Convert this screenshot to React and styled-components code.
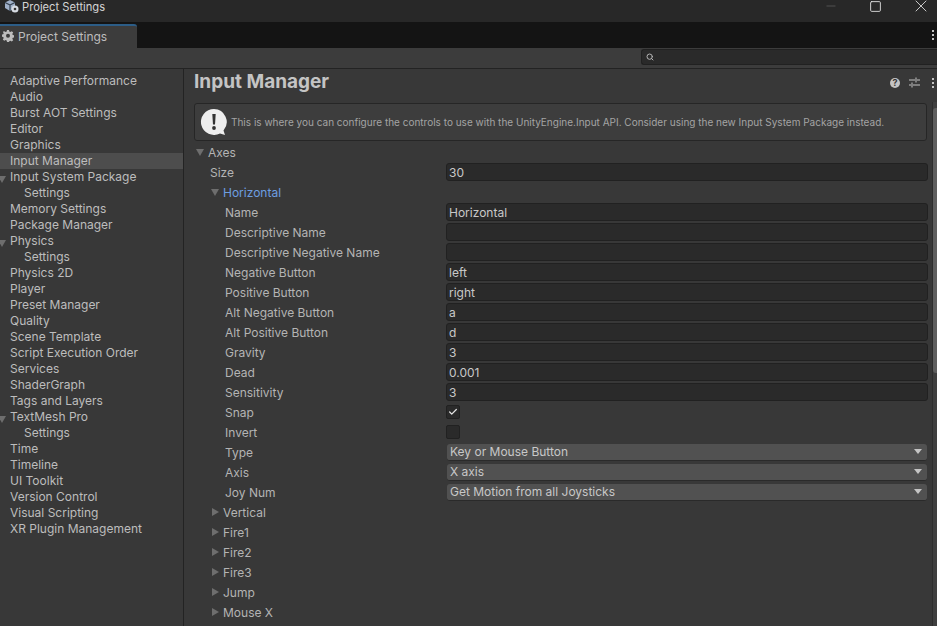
import React from "react";
import styled, { createGlobalStyle } from "styled-components";
import { X, Square, Minus, Search, Check } from "lucide-react";

const GlobalStyle = createGlobalStyle`
  html, body {
    margin: 0;
    padding: 0;
    background: #383838;
    overflow: hidden;
  }
  * {
    box-sizing: border-box;
  }
`;

const Window = styled.div`
  width: 937px;
  height: 626px;
  overflow: hidden;
  display: flex;
  flex-direction: column;
  font-family: Inter, "Liberation Sans", sans-serif;
  font-size: 12px;
  color: #bdbdbd;
  background: #383838;
`;

const TitleBar = styled.div`
  height: 22px;
  flex: none;
  display: flex;
  align-items: center;
  background: #282828;
  color: #d4d4d4;
  padding: 0 0 8px 3px;
  gap: 3px;
  font-size: 11.2px;
`;

const WindowButtons = styled.div`
  margin-left: auto;
  margin-right: -6px;
  margin-bottom: 2px;
  display: flex;
  align-items: center;
`;

const WindowButton = styled.div`
  width: 45px;
  height: 20px;
  display: flex;
  align-items: center;
  justify-content: center;
`;

const TabStrip = styled.div`
  height: 26px;
  flex: none;
  display: flex;
  align-items: flex-end;
  justify-content: space-between;
  background: #141414;
`;

const Tab = styled.div`
  width: 137px;
  height: 24px;
  display: flex;
  align-items: center;
  gap: 4px;
  padding: 0 0 2px 2px;
  background: #3c3c3c;
  border-top: 2px solid #2c5d87;
  border-top-right-radius: 3px;
  color: #bdbdbd;
`;

const Dots = styled.div`
  display: flex;
  flex-direction: column;
  gap: 2px;
  margin-right: ${({ $right }) => $right}px;
  align-self: center;

  i {
    width: 2px;
    height: 2px;
    background: #c4c4c4;
    display: block;
  }
`;

const Toolbar = styled.div`
  height: 21px;
  flex: none;
  display: flex;
  justify-content: flex-end;
  align-items: center;
  background: #3c3c3c;
  border-bottom: 1px solid #232323;
  padding-bottom: 2px;
`;

const SearchBox = styled.div`
  width: 296px;
  height: 16px;
  display: flex;
  align-items: center;
  padding-left: 4px;
  background: #2a2a2a;
  border: 1px solid #212121;
  border-right: 0;
  border-radius: 3px 0 0 3px;
  color: #b4b4b4;
`;

const Body = styled.div`
  flex: 1;
  display: flex;
  min-height: 0;
`;

const Sidebar = styled.nav`
  width: 184px;
  flex: none;
  padding-top: 4px;
  border-right: 1px solid #232323;
`;

const NavItem = styled.div`
  position: relative;
  height: 16px;
  line-height: 16px;
  padding-left: ${({ $child }) => ($child ? 24 : 10)}px;
  background: ${({ $active }) => ($active ? "#4d4d4d" : "transparent")};
  white-space: nowrap;
`;

const NavArrow = styled.span`
  position: absolute;
  left: 0;
  top: 7px;
  width: 0;
  height: 0;
  border-left: 4.5px solid transparent;
  border-right: 4.5px solid transparent;
  border-top: 7px solid #6e6e6e;
  margin-left: -2px;
`;

const Main = styled.main`
  flex: 1;
  min-width: 0;
  position: relative;
  padding: 0 9px 0 10px;
`;

const Header = styled.div`
  height: 26px;
  display: flex;
  align-items: center;
  justify-content: space-between;
`;

const Title = styled.h1`
  margin: 0;
  font-size: 19px;
  font-weight: 700;
  color: #c4c4c4;
  position: relative;
  top: -1px;
`;

const HeaderTools = styled.div`
  display: flex;
  align-items: center;
  gap: 12px;
  margin-right: -9px;
  padding-top: 1px;
  color: #c4c4c4;
`;

const HelpIcon = styled.span`
  width: 10px;
  height: 10px;
  margin-right: -3px;
  border-radius: 50%;
  background: #c4c4c4;
  color: #383838;
  font-size: 9px;
  font-weight: 700;
  line-height: 10px;
  text-align: center;
`;

const Notice = styled.div`
  height: 38px;
  margin-top: 8px;
  width: 733px;
  display: flex;
  align-items: center;
  gap: 3px;
  padding-left: 5px;
  background: #3d3d3d;
  border: 1px solid #262626;
  border-radius: 3px;
  font-size: 10px;
  color: #a4a4a4;
`;

const Rows = styled.div`
  padding-top: 1px;
`;

const Row = styled.div`
  height: 20px;
  display: flex;
  align-items: center;
`;

const Label = styled.div`
  position: relative;
  width: ${({ $depth }) => 252 - $depth}px;
  margin-left: ${({ $depth }) => $depth}px;
  flex: none;
  white-space: nowrap;
  color: ${({ $blue }) => ($blue ? "#6d9ee0" : "#b4b4b4")};
`;

const Fold = styled.span`
  position: absolute;
  left: ${({ $open }) => ($open ? -12 : -11)}px;
  top: ${({ $open }) => ($open ? 4 : 3)}px;
  width: 0;
  height: 0;
  ${({ $open }) =>
    $open
      ? `border-left: 4.5px solid transparent;
         border-right: 4.5px solid transparent;
         border-top: 7px solid #6e6e6e;`
      : `border-top: 4.5px solid transparent;
         border-bottom: 4.5px solid transparent;
         border-left: 7px solid #6e6e6e;`}
`;

const TextField = styled.div`
  width: 482px;
  height: 18px;
  line-height: 18px;
  padding-left: 2px;
  background: #2a2a2a;
  border: 1px solid #212121;
  border-radius: 3px;
  color: #c8c8c8;
`;

const Checkbox = styled.div`
  width: 14px;
  height: 14px;
  display: flex;
  align-items: center;
  justify-content: center;
  background: #2a2a2a;
  border: 1px solid #212121;
  border-radius: 2px;
  color: #e4e4e4;
`;

const Dropdown = styled.div`
  width: 480px;
  height: 17px;
  margin-left: 1px;
  display: flex;
  align-items: center;
  justify-content: space-between;
  padding: 0 5px 0 3px;
  background: #515151;
  border-bottom: 1px solid #2a2a2a;
  border-radius: 3px;
  color: #c8c8c8;
`;

const Caret = styled.span`
  width: 0;
  height: 0;
  border-left: 4px solid transparent;
  border-right: 4px solid transparent;
  border-top: 5px solid #c4c4c4;
`;

const ScrollTrack = styled.div`
  position: absolute;
  top: 33px;
  right: 0;
  bottom: 0;
  width: 5px;
  background: #3f3f3f;
  border-left: 1px solid #2e2e2e;
`;

const ScrollThumb = styled.div`
  margin-top: 6px;
  height: 265px;
  background: #5f5f5f;
  border-radius: 3px 0 0 3px;
`;

const navItems = [
  { label: "Adaptive Performance" },
  { label: "Audio" },
  { label: "Burst AOT Settings" },
  { label: "Editor" },
  { label: "Graphics" },
  { label: "Input Manager", active: true },
  { label: "Input System Package", open: true },
  { label: "Settings", child: true },
  { label: "Memory Settings" },
  { label: "Package Manager" },
  { label: "Physics", open: true },
  { label: "Settings", child: true },
  { label: "Physics 2D" },
  { label: "Player" },
  { label: "Preset Manager" },
  { label: "Quality" },
  { label: "Scene Template" },
  { label: "Script Execution Order" },
  { label: "Services" },
  { label: "ShaderGraph" },
  { label: "Tags and Layers" },
  { label: "TextMesh Pro", open: true },
  { label: "Settings", child: true },
  { label: "Time" },
  { label: "Timeline" },
  { label: "UI Toolkit" },
  { label: "Version Control" },
  { label: "Visual Scripting" },
  { label: "XR Plugin Management" },
];

const fields = [
  { label: "Name", text: "Horizontal" },
  { label: "Descriptive Name", text: "" },
  { label: "Descriptive Negative Name", text: "" },
  { label: "Negative Button", text: "left" },
  { label: "Positive Button", text: "right" },
  { label: "Alt Negative Button", text: "a" },
  { label: "Alt Positive Button", text: "d" },
  { label: "Gravity", text: "3" },
  { label: "Dead", text: "0.001" },
  { label: "Sensitivity", text: "3" },
  { label: "Snap", check: true },
  { label: "Invert", check: false },
  { label: "Type", select: "Key or Mouse Button" },
  { label: "Axis", select: "X axis" },
  { label: "Joy Num", select: "Get Motion from all Joysticks" },
];

const collapsed = ["Vertical", "Fire1", "Fire2", "Fire3", "Jump", "Mouse X"];

const UnityIcon = () => (
  <svg width="16" height="16" viewBox="0 0 16 16">
    <path d="M7 1l5 2.500v5.500l-5 3-5-3V3.500z" fill="#9fb0c8" />
    <path d="M7 6L2 3.500M7 6l5-2.500M7 6v6" stroke="#33404f" strokeWidth="1.200" fill="none" />
    <circle cx="12" cy="10" r="3.500" fill="#d6dbe2" />
    <circle cx="12" cy="10" r="1.300" fill="#333" />
  </svg>
);

const GearIcon = () => (
  <svg width="12" height="12" viewBox="0 0 12 12">
    <path
      d="M5 0h2l.3 1.600 1.100.5L9.800 1.200l1.400 1.400-.9 1.400.5 1.100 1.600.3v2l-1.600.3-.5 1.100.9 1.400-1.400 1.400-1.400-.9-1.100.5L7 12H5l-.3-1.600-1.100-.5-1.400.9L.8 9.400l.9-1.400-.5-1.100L-.4 6.600v-2l1.600-.3.5-1.100-.9-1.400L2.200 1.200l1.400.9 1.100-.5z"
      fill="#bdbdbd"
    />
    <circle cx="6" cy="5.800" r="2" fill="#3c3c3c" />
  </svg>
);

const SlidersIcon = () => (
  <svg width="11" height="11" viewBox="0 0 11 11" fill="none" stroke="#c4c4c4" strokeWidth="1">
    <path d="M0 3h6M8 3h3M7 0.500v5M0 8h2M4 8h7M3 5.500v5" />
  </svg>
);

const NoticeIcon = () => (
  <svg width="28" height="28" viewBox="0 0 28 28">
    <path d="M14 1a13 13 0 1 0 6 24.500L25 27l-1.500-4.500A13 13 0 0 0 14 1z" fill="#eeeeee" />
    <path d="M12.300 6h3.400l-.7 10.500h-2z" fill="#333" />
    <circle cx="14" cy="20" r="1.900" fill="#333" />
  </svg>
);

export default function App() {
  return (
    <Window>
      <GlobalStyle />
      <TitleBar>
        <UnityIcon />
        <span>Project Settings</span>
        <WindowButtons>
          <WindowButton>
            <Minus size={14} color="#5c5c5c" strokeWidth={1.4} />
          </WindowButton>
          <WindowButton>
            <Square size={13} color="#e8e8e8" strokeWidth={1.6} />
          </WindowButton>
          <WindowButton>
            <X size={20} color="#e8e8e8" strokeWidth={1} />
          </WindowButton>
        </WindowButtons>
      </TitleBar>
      <TabStrip>
        <Tab>
          <GearIcon />
          <span>Project Settings</span>
        </Tab>
        <Dots $right={3}>
          <i />
          <i />
          <i />
        </Dots>
      </TabStrip>
      <Toolbar>
        <SearchBox>
          <Search size={8} strokeWidth={3} />
        </SearchBox>
      </Toolbar>
      <Body>
        <Sidebar>
          {navItems.map((item, i) => (
            <NavItem key={i} $active={item.active} $child={item.child}>
              {item.open && <NavArrow />}
              {item.label}
            </NavItem>
          ))}
        </Sidebar>
        <Main>
          <Header>
            <Title>Input Manager</Title>
            <HeaderTools>
              <HelpIcon>?</HelpIcon>
              <SlidersIcon />
              <Dots $right={3}>
                <i />
                <i />
                <i />
              </Dots>
            </HeaderTools>
          </Header>
          <Notice>
            <NoticeIcon />
            <span>
              This is where you can configure the controls to use with the UnityEngine.Input API.
              Consider using the new Input System Package instead.
            </span>
          </Notice>
          <Rows>
            <Row>
              <Label $depth={14}>
                <Fold $open />
                Axes
              </Label>
            </Row>
            <Row>
              <Label $depth={16}>Size</Label>
              <TextField>30</TextField>
            </Row>
            <Row>
              <Label $depth={29} $blue>
                <Fold $open />
                Horizontal
              </Label>
            </Row>
            {fields.map((f) => (
              <Row key={f.label}>
                <Label $depth={31}>{f.label}</Label>
                {f.select ? (
                  <Dropdown>
                    {f.select}
                    <Caret />
                  </Dropdown>
                ) : f.check !== undefined ? (
                  <Checkbox>{f.check && <Check size={10} strokeWidth={3} />}</Checkbox>
                ) : (
                  <TextField>{f.text}</TextField>
                )}
              </Row>
            ))}
            {collapsed.map((name) => (
              <Row key={name}>
                <Label $depth={29}>
                  <Fold />
                  {name}
                </Label>
              </Row>
            ))}
          </Rows>
          <ScrollTrack>
            <ScrollThumb />
          </ScrollTrack>
        </Main>
      </Body>
    </Window>
  );
}
